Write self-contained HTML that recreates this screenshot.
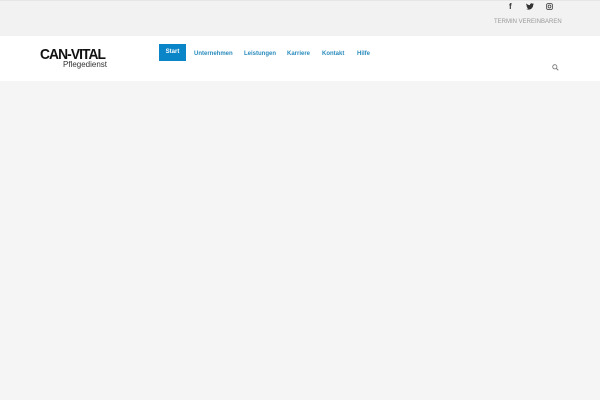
<!DOCTYPE html>
<html><head><meta charset="utf-8"><style>
*{margin:0;padding:0;box-sizing:border-box}
body{width:600px;height:400px;background:#f5f5f5;font-family:"Liberation Sans",sans-serif;position:relative;overflow:hidden}
.top{position:absolute;left:0;top:0;width:600px;height:36px;background:#f2f2f2;border-top:1px solid #e6e6e6}
.hdr{position:absolute;left:0;top:36px;width:600px;height:45px;background:#fff}
.soc{position:absolute;top:2px;font-size:8px;color:#333}
.term{position:absolute;left:494px;top:19px;font-size:6px;color:#999}
.logo1{position:absolute;left:40px;top:46px;font-size:15px;font-weight:bold;color:#111;letter-spacing:-1px;transform:scaleX(.92);transform-origin:left}
.logo2{position:absolute;left:63px;top:60px;width:42px;text-align:right;font-size:8px;color:#333}
.start{position:absolute;left:159px;top:44px;width:27px;height:17px;background:#0a85c8;color:#fff;font-size:6px;font-weight:bold;text-align:center;line-height:17px}
.nav{position:absolute;top:50.5px;font-size:6px;font-weight:bold;color:#2a8bbd}
</style></head><body>
<div class="top"></div>
<div class="soc" style="left:509px;font-weight:bold">f</div>
<svg style="position:absolute;left:526px;top:3px" width="8" height="7" viewBox="0 0 24 20"><path d="M24 2.5a10 10 0 0 1-2.8.8A5 5 0 0 0 23.3.5a10 10 0 0 1-3.1 1.2A5 5 0 0 0 11.8 6 14 14 0 0 1 1.6.9a5 5 0 0 0 1.5 6.6A5 5 0 0 1 .9 6.9a5 5 0 0 0 3.900 4.8 5 5 0 0 1-2.2.1 5 5 0 0 0 4.6 3.4A10 10 0 0 1 0 17.3 14 14 0 0 0 7.5 19.5c9 0 14-7.5 14-14v-.6A10 10 0 0 0 24 2.5z" fill="#333"/></svg>
<svg style="position:absolute;left:546px;top:3px" width="7" height="7" viewBox="0 0 24 24"><rect x="2" y="2" width="20" height="20" rx="5" fill="none" stroke="#333" stroke-width="2.5"/><circle cx="12" cy="12" r="5" fill="none" stroke="#333" stroke-width="2.5"/></svg>
<div class="term">TERMIN VEREINBAREN</div>
<div class="hdr"></div>
<div class="logo1">CAN-VITAL</div>
<div class="logo2">Pflegedienst</div>
<div class="start">Start</div>
<div class="nav" style="left:194px">Unternehmen</div>
<div class="nav" style="left:244px">Leistungen</div>
<div class="nav" style="left:287px">Karriere</div>
<div class="nav" style="left:322px">Kontakt</div>
<div class="nav" style="left:357px">Hilfe</div>
<svg style="position:absolute;left:552px;top:64px" width="7" height="7" viewBox="0 0 10 10"><circle cx="4" cy="4" r="3" fill="none" stroke="#777" stroke-width="1.2"/><path d="M6.2 6.2L9 9" stroke="#777" stroke-width="1.4"/></svg>
</body></html>
